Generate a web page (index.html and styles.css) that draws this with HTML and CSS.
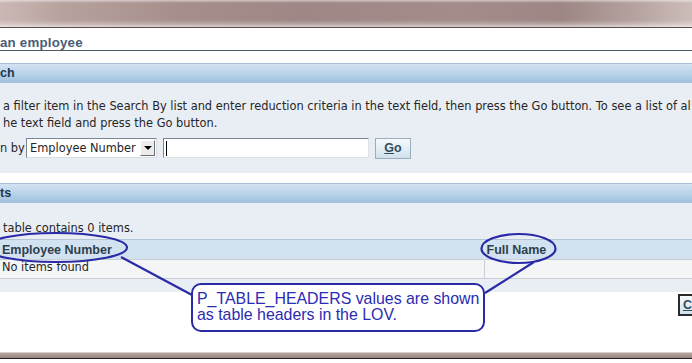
FILE: index.html
```html
<!DOCTYPE html>
<html>
  <head>
    <title>Search and Select: an employee</title>
    <meta charset="utf-8" />
    <link rel="stylesheet" href="styles.css">
  </head>
  <body>
    <div class="page">
      <div class="topband"></div>
      <div class="title">an employee</div>
      <div class="hdr">ch</div>
      <div class="box search">
        <p class="line">a filter item in the Search By list and enter reduction criteria in the text field, then press the Go button. To see a list of al</p>
        <p class="line">he text field and press the Go button.</p>
        <div class="row">
          <span class="lbl">n by</span>
          <div class="sel">
            <span class="seltext">Employee Number</span>
            <span class="arrow"></span>
          </div>
          <div class="field"><span class="caret"></span></div>
          <button class="go"><u>G</u>o</button>
        </div>
      </div>
      <div class="hdr res">ts</div>
      <div class="box results">
        <p class="line count">table contains 0 items.</p>
        <table class="grid">
          <tr class="th">
            <td class="c1">Employee Number</td>
            <td class="c2">Full Name</td>
          </tr>
          <tr class="td">
            <td class="c1">No items found</td>
            <td class="c2"></td>
          </tr>
        </table>
      </div>
      <div class="actions">
        <button class="cancel"><u>C</u></button>
      </div>
      <div class="botband"></div>

      <svg class="marks" width="692" height="363" viewBox="0 0 692 363">
        <ellipse cx="56" cy="247.5" rx="71" ry="14.5" />
        <ellipse cx="518.5" cy="248.5" rx="37" ry="14.5" />
        <line x1="121" y1="257" x2="192" y2="295" />
        <line x1="534" y1="262" x2="485" y2="293" />
      </svg>
      <div class="callout">P_TABLE_HEADERS values are shown<br>as table headers in the LOV.</div>
    </div>
  </body>
</html>
```
FILE: styles.css
```css
*{
	margin:0px;
	padding:0px;
	box-sizing:border-box;
}
body{
	width:692px;
	height:363px;
	overflow:hidden;
	background:#fff;
	font-family:"DejaVu Sans", Verdana, sans-serif;
	font-size:11.4px;
	color:#222;
}
.page{
	position:relative;
	height:363px;
	display:flex;
	flex-direction:column;
}
.topband{
	height:28px;
	border-bottom:1px solid #5c4c4a;
	background:
		linear-gradient(to bottom, rgba(255,255,255,0.5) 0px, rgba(255,255,255,0) 3px, rgba(0,0,0,0) 20px, rgba(255,255,255,0.25) 24px, rgba(255,255,255,0.6) 27px),
		linear-gradient(to right, #cbb8b4 0px, #b8a29e 60px, #a68f8b 180px, #9e8784 300px, #a38c89 460px, #9d8683 560px, #b3a09c 630px, #cdbdb9 692px);
}
.title{
	height:23px;
	padding-top:8px;
	line-height:14px;
	font-family:"Liberation Sans", Arial, sans-serif;
	font-size:13.3px;
	font-weight:bold;
	color:#4a5d78;
	border-bottom:1px solid #4c5a68;
	letter-spacing:0.2px;
}
.hdr{
	margin-top:12px;
	height:20px;
	border-top:1px solid #a9c0d6;
	background:linear-gradient(to bottom, #d3e4f3, #9fc1df);
	font-family:"Liberation Sans", Arial, sans-serif;
	font-weight:bold;
	font-size:12.5px;
	line-height:18px;
	color:#1d3754;
}
.hdr.res{
	margin-top:10px;
}
.box{
	background:#e9eef5;
}
.search{
	height:90px;
	padding-top:15px;
}
.line{
	line-height:17px;
	padding-left:3px;
	white-space:nowrap;
	color:#262626;
}
.row{
	margin-top:6px;
	display:flex;
	align-items:center;
	height:20px;
}
.lbl{
	width:26px;
	color:#262626;
}
.sel{
	width:131px;
	height:20px;
	display:flex;
	align-items:center;
	background:#fff;
	border:1px solid #7b8794;
	border-right-color:#d8dde3;
	border-bottom-color:#d8dde3;
}
.seltext{
	flex:1;
	padding-left:3px;
	line-height:18px;
	color:#262626;
	white-space:nowrap;
}
.arrow{
	width:15px;
	height:16px;
	margin-right:1px;
	background:#ececec;
	border:1px solid #fff;
	border-right-color:#6e6e6e;
	border-bottom-color:#6e6e6e;
	position:relative;
}
.arrow:after{
	content:"";
	position:absolute;
	left:3px;
	top:5px;
	border-left:4px solid transparent;
	border-right:4px solid transparent;
	border-top:4px solid #000;
}
.field{
	margin-left:6px;
	width:206px;
	height:20px;
	background:#fff;
	border:1px solid #7b8794;
	border-right-color:#dfe3e8;
	border-bottom-color:#dfe3e8;
	padding:2px 0 0 2px;
}
.caret{
	display:block;
	width:1px;
	height:15px;
	background:#000;
}
.go{
	margin-left:6px;
	width:36px;
	height:21px;
	font-family:"Liberation Sans", Arial, sans-serif;
	font-size:12.5px;
	font-weight:bold;
	color:#334c5c;
	background:linear-gradient(to bottom, #f6fafc, #cfe2ec);
	border:1px solid #9aaebd;
}
.results{
	height:89px;
	padding-top:17px;
}
.count{
	height:19px;
}
.grid{
	width:700px;
	border-collapse:collapse;
}
.grid td{
	padding:0 2px;
	white-space:nowrap;
}
.th td{
	height:20px;
	background:#d2e2f0;
	border-top:1px solid #b4c6d6;
	font-family:"Liberation Sans", Arial, sans-serif;
	font-size:12.5px;
	font-weight:bold;
	color:#2e3f4e;
}
.td td{
	height:19px;
	background:#f4f5f7;
	border-top:1px solid #c9ced4;
	border-bottom:1px solid #c9ced4;
	color:#262626;
	line-height:15px;
	vertical-align:top;
}
.c1{
	width:484px;
}
.grid .c2{
	border-left:1px solid #c6ced6;
}
.th .c2{
	border-left:1px solid #dfe8f1;
}
.actions{
	display:flex;
	justify-content:flex-end;
	margin-top:2px;
}
.cancel{
	width:22px;
	height:22px;
	margin-right:-8px;
	font-family:"Liberation Sans", Arial, sans-serif;
	font-size:12.5px;
	font-weight:bold;
	color:#334c5c;
	text-align:left;
	padding-left:3px;
	background:linear-gradient(to bottom, #f6fafc, #cfe2ec);
	border:2px solid #2a2a2a;
}
.botband{
	margin-top:auto;
	margin-bottom:4px;
	height:7px;
	border-top:1px solid #d8cecc;
	border-bottom:1px solid #2a2222;
	background:linear-gradient(to bottom, #b7a4a0, #948380);
}
.marks{
	position:absolute;
	left:0;
	top:0;
}
.marks ellipse, .marks line{
	fill:none;
	stroke:#2a2aa6;
	stroke-width:2.2;
}
.callout{
	position:absolute;
	left:191px;
	top:283px;
	width:294px;
	height:49px;
	background:#fff;
	border:2px solid #2a2aa6;
	border-radius:10px;
	padding:6px 0 0 4px;
	font-family:"Liberation Sans", Arial, sans-serif;
	font-size:15.9px;
	line-height:16px;
	color:#2b2bb3;
}
```
